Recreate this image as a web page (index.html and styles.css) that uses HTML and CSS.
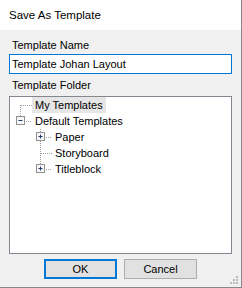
FILE: index.html
```html
<!DOCTYPE html>
<html lang="en">
<head>
  <meta charset="UTF-8">
  <title>Save As Template</title>
  <link rel="stylesheet" href="styles.css">
</head>
<body>

<div class="window">
  <div class="titlebar">Save As Template</div>

  <div class="content">
    <label class="label" for="template-name">Template Name</label>
    <input class="name-input" type="text" id="template-name" value="Template Johan Layout" />

    <div class="label">Template Folder</div>
    <div class="tree">
      <div class="row">
        <svg class="twig" width="22" height="16">
          <path d="M10.5 8v8" class="dots" />
          <path d="M11 8.5h11" class="dots" />
        </svg>
        <span class="node selected">My Templates</span>
      </div>
      <div class="row">
        <svg class="twig" width="22" height="16">
          <path d="M10.5 0v4" class="dots" />
          <path d="M16 8.5h6" class="dots" />
          <rect x="6.5" y="3.5" width="8" height="8" class="box" />
          <path d="M8.5 7.5h4" class="sign" />
        </svg>
        <span class="node">Default Templates</span>
      </div>
      <div class="row child">
        <svg class="twig" width="22" height="16">
          <path d="M10.5 0v16" class="dots" />
          <path d="M16 8.5h6" class="dots" />
          <rect x="6.5" y="3.5" width="8" height="8" class="box" />
          <path d="M8.5 7.5h4M10.5 5.5v4" class="sign" />
        </svg>
        <span class="node">Paper</span>
      </div>
      <div class="row child">
        <svg class="twig" width="22" height="16">
          <path d="M10.5 0v16" class="dots" />
          <path d="M11 8.5h11" class="dots" />
        </svg>
        <span class="node">Storyboard</span>
      </div>
      <div class="row child">
        <svg class="twig" width="22" height="16">
          <path d="M10.5 0v4" class="dots" />
          <path d="M16 8.5h6" class="dots" />
          <rect x="6.5" y="3.5" width="8" height="8" class="box" />
          <path d="M8.5 7.5h4M10.5 5.5v4" class="sign" />
        </svg>
        <span class="node">Titleblock</span>
      </div>
    </div>
  </div>

  <div class="buttons">
    <button class="btn default">OK</button>
    <button class="btn">Cancel</button>
  </div>

  <svg class="grip" width="9" height="9">
    <rect x="6" y="0" width="2" height="2" />
    <rect x="3" y="3" width="2" height="2" />
    <rect x="6" y="3" width="2" height="2" />
    <rect x="0" y="6" width="2" height="2" />
    <rect x="3" y="6" width="2" height="2" />
    <rect x="6" y="6" width="2" height="2" />
  </svg>
</div>

</body>
</html>
```

FILE: styles.css
```css
body {
  margin: 0;
  font-family: "Liberation Sans", Arial, sans-serif;
  font-size: 11px;
  color: #000;
}
.window {
  position: relative;
  width: 242px;
  height: 288px;
  box-sizing: border-box;
  background: #f0f0f0;
  border-right: 1px solid #888;
  border-bottom: 1px solid #888;
  display: flex;
  flex-direction: column;
}
.titlebar {
  height: 30px;
  line-height: 30px;
  background: white;
  padding-left: 9px;
  font-size: 11.5px;
}
.content {
  padding: 7px 9px 0 9px;
  display: flex;
  flex-direction: column;
}
.label {
  display: block;
  height: 17px;
  line-height: 17px;
  padding-left: 3px;
}
.name-input {
  box-sizing: border-box;
  width: 223px;
  height: 20px;
  margin: 0 0 3px 0;
  padding: 0 2px;
  border: 1px solid #0078d7;
  outline: none;
  font-family: inherit;
  font-size: 11px;
  color: #000;
  background: white;
}
.tree {
  box-sizing: border-box;
  width: 223px;
  height: 158px;
  margin-top: 2px;
  background: white;
  border: 1px solid #828790;
}
.row {
  display: flex;
  align-items: center;
  height: 16px;
}
.row.child {
  padding-left: 20px;
}
.twig {
  display: block;
  flex: none;
}
.dots {
  stroke: #a0a0a0;
  stroke-width: 1;
  stroke-dasharray: 1 1;
  fill: none;
}
.box {
  fill: #f7f7f7;
  stroke: #919191;
}
.sign {
  stroke: #1e3f6e;
  fill: none;
}
.node {
  height: 16px;
  line-height: 16px;
  padding: 0 3px 0 3px;
  margin-left: 0;
}
.node.selected {
  background: #e6e6e6;
}
.buttons {
  display: flex;
  justify-content: center;
  gap: 7px;
  margin-top: 5px;
}
.btn {
  box-sizing: border-box;
  width: 73px;
  height: 20px;
  padding: 0;
  background: #e1e1e1;
  border: 1px solid #adadad;
  font-family: inherit;
  font-size: 11px;
  color: #000;
}
.btn.default {
  border: 2px solid #0078d7;
}
.grip {
  position: absolute;
  right: 2px;
  bottom: 2px;
  fill: #bcbcbc;
}
```
